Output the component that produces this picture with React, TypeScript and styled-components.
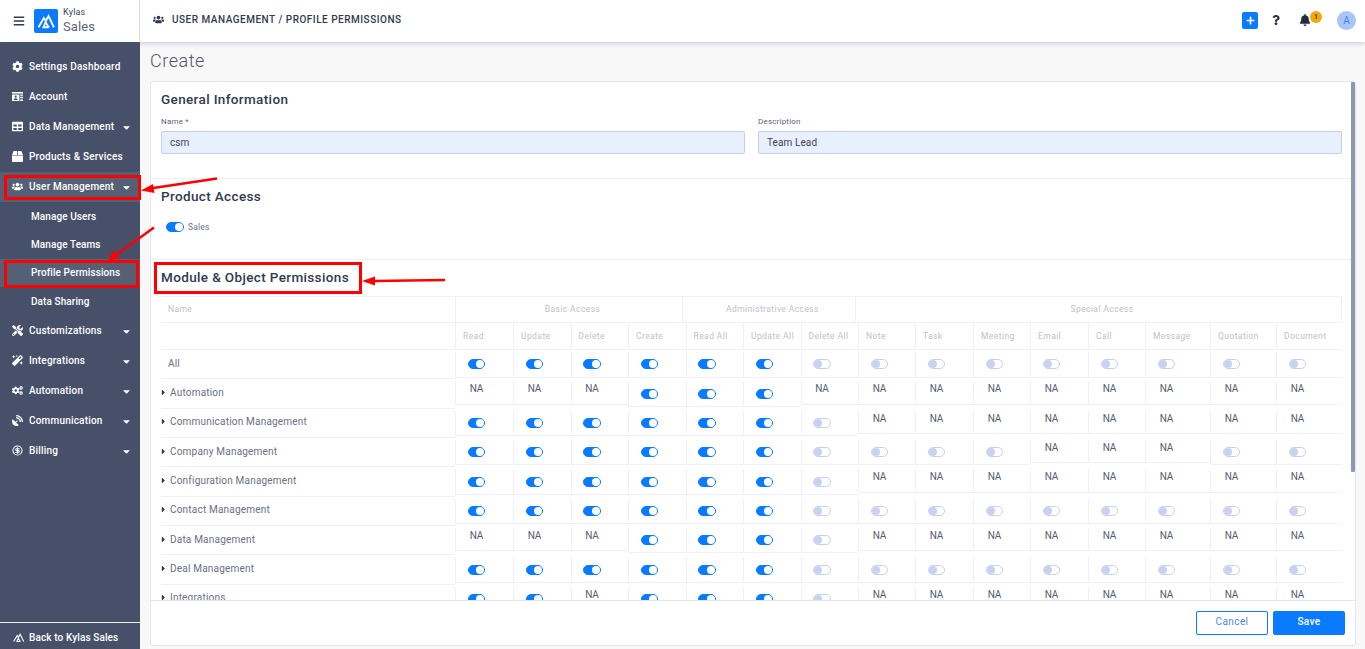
import React from "react";
import styled, { createGlobalStyle } from "styled-components";
import {
  FaBars, FaBell, FaBox, FaCaretDown, FaCaretRight, FaCog, FaCogs, FaMagic, FaPlus,
  FaQuestion, FaSatelliteDish, FaTable, FaTools, FaUsers,
} from "react-icons/fa";
import { CircleDollarSign } from "lucide-react";

const FONT = `Roboto, "Liberation Sans", sans-serif`;
const LINE = "#edf0fc";

const Global = createGlobalStyle`
  html, body { margin: 0; padding: 0; height: 100%; overflow: hidden; }
  body { font-family: ${FONT}; background: #f8f8f9; }
  * { box-sizing: border-box; }
`;

const Page = styled.div`
  position: relative;
  width: 1365px;
  height: 649px;
  display: grid;
  grid-template-rows: 42px 1fr;
  overflow: hidden;
`;

/* ---------- top bar ---------- */
const TopBar = styled.header`
  display: flex;
  align-items: stretch;
  background: #fff;
  box-shadow: 0 1px 5px rgba(90, 95, 130, 0.35);
  position: relative;
  z-index: 2;
`;
const Brand = styled.div`
  width: 140px;
  height: 41px;
  display: flex;
  align-items: center;
  padding-left: 12.5px;
  border-right: 1px solid #d5d8e0;
  color: #2f3a4f;
`;
const LogoBox = styled.div`
  width: 24px;
  height: 24px;
  margin-left: 9.5px;
  border-radius: 2px;
  background: #0a7bff;
  display: flex;
  align-items: center;
  justify-content: center;
`;
const BrandText = styled.div`
  margin-left: 5px;
  display: flex;
  flex-direction: column;
  color: #5b6579;
`;
const BrandTop = styled.span`
  font-size: 9px;
  line-height: 11px;
  letter-spacing: 0.2px;
  color: #3b4558;
`;
const BrandName = styled.span`
  font-size: 13px;
  line-height: 15px;
  letter-spacing: 0.1px;
  margin-top: 1px;
`;
const Crumb = styled.div`
  display: flex;
  align-items: center;
  gap: 8px;
  padding-left: 13px;
  flex: 1;
  height: 38px;
  color: #2f3a4f;
  font-size: 10px;
  font-weight: 500;
  letter-spacing: 0.5px;
  text-transform: uppercase;
`;
const Tools = styled.div`
  display: flex;
  align-items: center;
  height: 40px;
  padding-right: 9px;
`;
const PlusButton = styled.span`
  width: 16px;
  height: 17px;
  border-radius: 2px;
  background: #0a7bff;
  color: #fff;
  display: flex;
  align-items: center;
  justify-content: center;
`;
const HelpIcon = styled.span`
  display: flex;
  margin-left: 13px;
  color: #2a3347;
`;
const BellWrap = styled.span`
  position: relative;
  display: flex;
  margin-left: 18px;
  margin-right: 26px;
  color: #232b3e;
`;
const BellBadge = styled.span`
  position: absolute;
  top: -3px;
  left: 11px;
  width: 12px;
  height: 12px;
  border-radius: 50%;
  background: #eeaa10;
  color: #5a4a10;
  font-size: 7.5px;
  font-weight: 700;
  line-height: 12px;
  text-align: center;
`;
const Avatar = styled.span`
  width: 19px;
  height: 19px;
  border-radius: 50%;
  background: #a9c5f8;
  color: #3e82f2;
  font-size: 10px;
  line-height: 19px;
  text-align: center;
`;

/* ---------- body ---------- */
const Body = styled.div`
  display: grid;
  grid-template-columns: 140px 1fr;
  min-height: 0;
`;
const Sidebar = styled.nav`
  background: #465068;
  color: #fff;
  display: flex;
  flex-direction: column;
  padding-top: 10px;
  min-height: 0;
`;
const NavItem = styled.div<{ $active?: boolean }>`
  height: 30px;
  display: flex;
  align-items: center;
  padding-left: 12px;
  padding-right: 8px;
  padding-bottom: 1px;
  font-size: 10px;
  font-weight: 500;
  letter-spacing: 0.2px;
  background: ${(p) => (p.$active ? "#566074" : "transparent")};
`;
const NavIcon = styled.span`
  width: 17px;
  flex: none;
  display: flex;
  align-items: center;
`;
const NavLabel = styled.span`
  flex: 1;
  white-space: nowrap;
`;
const Caret = styled.span`
  display: flex;
  width: 11px;
  margin-top: 2px;
`;
const SubItem = styled.div<{ $active?: boolean }>`
  height: 28.4px;
  display: flex;
  align-items: center;
  padding-left: 31px;
  font-size: 10px;
  font-weight: 500;
  letter-spacing: 0.08px;
  background: ${(p) => (p.$active ? "#566074" : "transparent")};
`;
const SideFoot = styled.div`
  margin-top: auto;
  height: 27px;
  border-top: 1px solid #f1f2f6;
  display: flex;
  align-items: center;
  padding-left: 12px;
  padding-top: 3px;
  font-size: 10px;
  font-weight: 500;
  letter-spacing: 0.12px;
`;

const Main = styled.main`
  padding: 0 9px 3px 10px;
  display: flex;
  flex-direction: column;
  min-height: 0;
`;
const Title = styled.h1`
  margin: 0;
  height: 39px;
  padding-top: 8px;
  font-size: 18px;
  line-height: 22px;
  font-weight: 300;
  letter-spacing: 0.55px;
  color: #4e586c;
`;
const Card = styled.section`
  position: relative;
  flex: 1;
  min-height: 0;
  display: flex;
  flex-direction: column;
  background: #fff;
  border: 1px solid #e1e5f4;
  border-radius: 3px;
`;
const ScrollBody = styled.div`
  height: 518px;
  overflow: hidden;
  flex: none;
`;
const ScrollThumb = styled.div`
  position: absolute;
  top: 0;
  right: 0;
  width: 4px;
  height: 390px;
  background: #8f97b5;
  border-radius: 1px;
`;
const Section = styled.div`
  border-bottom: 1px solid ${LINE};
  padding: 0 10px;
`;
const H2 = styled.h2`
  margin: 0;
  font-size: 13.5px;
  line-height: 18px;
  font-weight: 500;
  letter-spacing: 0.36px;
  color: #2f3a4f;
`;
const GeneralSection = styled(Section)`
  height: 97px;
  padding-top: 8px;
`;
const FieldRow = styled.div`
  display: grid;
  grid-template-columns: 584px 584px;
  column-gap: 13px;
  margin-top: 9px;
`;
const Field = styled.div`
  display: flex;
  flex-direction: column;
`;
const FieldLabel = styled.label`
  font-size: 8px;
  line-height: 10px;
  height: 14px;
  letter-spacing: 0.2px;
  color: #5b6579;
  em {
    color: #e03a3a;
    font-style: normal;
  }
`;
const FieldValue = styled.div`
  height: 23px;
  background: #e8f0fe;
  border: 1px solid #c3cfe6;
  border-radius: 2px;
  padding-left: 8px;
  font-size: 10px;
  line-height: 21px;
  letter-spacing: 0.1px;
  color: #3a4356;
`;
const AccessSection = styled(Section)`
  height: 81px;
  padding-top: 8px;
`;
const AccessRow = styled.div`
  display: flex;
  align-items: center;
  gap: 4.5px;
  margin-top: 17px;
  padding-left: 5px;
  font-size: 8.5px;
  letter-spacing: 0.2px;
  color: #6b7385;
`;
const ModuleHead = styled.div`
  height: 36px;
  padding: 8px 10px 0;
`;
const TableWrap = styled.div`
  margin-left: 10px;
  width: 1181px;
`;
const GroupRow = styled.div`
  display: grid;
  grid-template-columns: 294px 227px 173px 487px;
  height: 27px;
  border-top: 1px solid ${LINE};
`;
const GroupCell = styled.div<{ $first?: boolean; $last?: boolean }>`
  display: flex;
  align-items: center;
  justify-content: ${(p) => (p.$first ? "flex-start" : "center")};
  padding-left: 7px;
  padding-bottom: 1px;
  border-left: ${(p) => (p.$first ? "0" : `1px solid ${LINE}`)};
  border-right: ${(p) => (p.$last ? `1px solid ${LINE}` : "0")};
  border-bottom: 1px solid ${LINE};
  font-size: 8.5px;
  letter-spacing: 0.4px;
  color: #bcc1cf;
`;
const COLS = "294px 58px 57.5px 57.5px 57.5px 57.5px 57.5px 57.5px 57px 58px 57px 58px 57px 65px 66px 65.5px";
const SubRow = styled.div`
  display: grid;
  grid-template-columns: ${COLS};
  height: 27px;
`;
const SubCell = styled.div<{ $blank?: boolean }>`
  display: flex;
  align-items: center;
  padding-left: 7px;
  padding-bottom: 1px;
  border-left: ${(p) => (p.$blank ? "0" : `1px solid ${LINE}`)};
  border-bottom: 1px solid ${LINE};
  font-size: 8.5px;
  letter-spacing: 0.42px;
  color: #bcc1cf;
  white-space: nowrap;
`;
const DataRow = styled.div`
  display: grid;
  grid-template-columns: ${COLS};
  height: 29.33px;
  align-items: start;
`;
const NameCell = styled.div<{ $plain?: boolean }>`
  height: 100%;
  display: flex;
  align-items: center;
  padding-left: ${(p) => (p.$plain ? "7px" : "0")};
  padding-bottom: 2px;
  border-bottom: 1px solid ${LINE};
  font-size: 10px;
  letter-spacing: 0.2px;
  color: #687082;
  white-space: nowrap;
`;
const RowCaret = styled.span`
  display: flex;
  width: 9px;
  margin-left: -2.5px;
  margin-right: 2.5px;
  color: #2f3a4f;
`;
const Cell = styled.div<{ $na?: boolean }>`
  margin-top: 2px;
  height: ${(p) => (p.$na ? "23.5px" : "25.5px")};
  padding-top: ${(p) => (p.$na ? "2px" : "0")};
  display: flex;
  align-items: ${(p) => (p.$na ? "flex-start" : "center")};
  border-left: 1px solid ${LINE};
  border-bottom: 1px solid ${LINE};
`;
const CellInner = styled.div`
  width: 41px;
  display: flex;
  justify-content: center;
  font-size: 10px;
  line-height: 12px;
  color: #545d70;
`;
const Toggle = styled.span<{ $on: boolean }>`
  position: relative;
  display: block;
  width: 17.5px;
  height: 10px;
  border-radius: 5px;
  background: ${(p) => (p.$on ? "#0a7bff" : "#fff")};
  border: 1px solid ${(p) => (p.$on ? "#0a7bff" : "#c6d0ef")};
  &::after {
    content: "";
    position: absolute;
    top: 0;
    ${(p) => (p.$on ? "right: 0;" : "left: 0;")}
    width: 8px;
    height: 8px;
    border-radius: 50%;
    background: ${(p) => (p.$on ? "#fff" : "#c8d2f0")};
  }
`;
const Footer = styled.footer`
  flex: 1;
  display: flex;
  justify-content: flex-end;
  align-items: flex-start;
  gap: 5px;
  padding: 10px 10px 0 0;
  border-top: 1px solid #e1e5f4;
`;
const Button = styled.button<{ $primary?: boolean }>`
  width: 72px;
  height: 24px;
  border-radius: 2px;
  font-family: ${FONT};
  font-size: 10px;
  font-weight: ${(p) => (p.$primary ? 500 : 400)};
  letter-spacing: 0.4px;
  padding: 0 0 3px;
  background: ${(p) => (p.$primary ? "#0a7bff" : "#fff")};
  color: ${(p) => (p.$primary ? "#fff" : "#4d86ee")};
  border: 1px solid #0a7bff;
`;
const Annotations = styled.svg`
  position: absolute;
  left: 0;
  top: 0;
  z-index: 5;
  pointer-events: none;
`;

const Mountain = ({ size, color, stroke = 2.2 }: { size: number; color: string; stroke?: number }) => (
  <svg width={size} height={size} viewBox="0 0 24 24" fill="none" stroke={color} strokeWidth={stroke} strokeLinejoin="miter">
    <path d="M3 19.5 9.5 8.5l3 4.5" />
    <path d="M9 19.5h5.5L15 19 11.5 13.5Z" />
    <path d="M12 11.5 15 6l6.5 13.5" />
  </svg>
);

const AccountIcon = () => (
  <svg width="11" height="11" viewBox="0 0 11 11" fill="#fff">
    <path d="M0 1h11v1.6H0z" />
    <path d="M0 3.4h7.4V10H0zM8.2 3.4H11v1.4H8.2zM8.2 5.8H11v1.4H8.2zM8.2 8.4H11V10H8.2z" />
    <circle cx="3.7" cy="5.6" r="1.1" fill="#465068" />
    <path d="M1.7 9c0-1.2 1-1.8 2-1.8s2 .6 2 1.8z" fill="#465068" />
  </svg>
);

const groups = ["Basic Access", "Administrative Access", "Special Access"];
const subs = ["Read", "Update", "Delete", "Create", "Read All", "Update All", "Delete All", "Note", "Task", "Meeting", "Email", "Call", "Message", "Quotation", "Document"];

/* 1 on, 0 off, n = NA */
const rows: { name: string; plain?: boolean; cells: string }[] = [
  { name: "All", plain: true, cells: "111111000000000" },
  { name: "Automation", cells: "nnn111nnnnnnnnn" },
  { name: "Communication Management", cells: "1111110nnnnnnnn" },
  { name: "Company Management", cells: "1111110000nnn00" },
  { name: "Configuration Management", cells: "1111110nnnnnnnn" },
  { name: "Contact Management", cells: "111111000000000" },
  { name: "Data Management", cells: "nnn1110nnnnnnnn" },
  { name: "Deal Management", cells: "111111000000000" },
  { name: "Integrations", cells: "11n1110nnnnnnnn" },
];

type Nav = { icon: React.ReactNode; label: string; caret?: boolean; active?: boolean; sub?: { label: string; active?: boolean }[] };
const nav: Nav[] = [
  { icon: <FaCog size={11} />, label: "Settings Dashboard" },
  { icon: <AccountIcon />, label: "Account" },
  { icon: <FaTable size={11} />, label: "Data Management", caret: true },
  { icon: <FaBox size={11} />, label: "Products & Services" },
  {
    icon: <FaUsers size={11} />, label: "User Management", caret: true, active: true,
    sub: [{ label: "Manage Users" }, { label: "Manage Teams" }, { label: "Profile Permissions", active: true }, { label: "Data Sharing" }],
  },
  { icon: <FaTools size={11} />, label: "Customizations", caret: true },
  { icon: <FaMagic size={11} />, label: "Integrations", caret: true },
  { icon: <FaCogs size={11} />, label: "Automation", caret: true },
  { icon: <FaSatelliteDish size={11} />, label: "Communication", caret: true },
  { icon: <CircleDollarSign size={11} strokeWidth={2.2} />, label: "Billing", caret: true },
];

export default function App() {
  return (
    <Page>
      <Global />
      <TopBar>
        <Brand>
          <FaBars size={12} />
          <LogoBox><Mountain size={20} color="#fff" /></LogoBox>
          <BrandText>
            <BrandTop>Kylas</BrandTop>
            <BrandName>Sales</BrandName>
          </BrandText>
        </Brand>
        <Crumb>
          <FaUsers size={11} />
          <span>User Management / Profile Permissions</span>
        </Crumb>
        <Tools>
          <PlusButton><FaPlus size={9} /></PlusButton>
          <HelpIcon><FaQuestion size={10} /></HelpIcon>
          <BellWrap>
            <FaBell size={12} />
            <BellBadge>1</BellBadge>
          </BellWrap>
          <Avatar>A</Avatar>
        </Tools>
      </TopBar>
      <Body>
        <Sidebar>
          {nav.map((item) => (
            <React.Fragment key={item.label}>
              <NavItem $active={item.active}>
                <NavIcon>{item.icon}</NavIcon>
                <NavLabel>{item.label}</NavLabel>
                {item.caret && <Caret><FaCaretDown size={11} /></Caret>}
              </NavItem>
              {item.sub?.map((s) => (
                <SubItem key={s.label} $active={s.active}>{s.label}</SubItem>
              ))}
            </React.Fragment>
          ))}
          <SideFoot>
            <NavIcon><Mountain size={13} color="#fff" stroke={2} /></NavIcon>
            <NavLabel>Back to Kylas Sales</NavLabel>
          </SideFoot>
        </Sidebar>
        <Main>
          <Title>Create</Title>
          <Card>
            <ScrollBody>
              <GeneralSection>
                <H2>General Information</H2>
                <FieldRow>
                  <Field>
                    <FieldLabel>Name <em>*</em></FieldLabel>
                    <FieldValue>csm</FieldValue>
                  </Field>
                  <Field>
                    <FieldLabel>Description</FieldLabel>
                    <FieldValue>Team Lead</FieldValue>
                  </Field>
                </FieldRow>
              </GeneralSection>
              <AccessSection>
                <H2>Product Access</H2>
                <AccessRow>
                  <Toggle $on />
                  <span>Sales</span>
                </AccessRow>
              </AccessSection>
              <ModuleHead><H2>Module &amp; Object Permissions</H2></ModuleHead>
              <TableWrap>
                <GroupRow>
                  <GroupCell $first>Name</GroupCell>
                  {groups.map((g, i) => (
                    <GroupCell key={g} $last={i === 2}>{g}</GroupCell>
                  ))}
                </GroupRow>
                <SubRow>
                  <SubCell $blank />
                  {subs.map((s) => <SubCell key={s}>{s}</SubCell>)}
                </SubRow>
                {rows.map((r) => (
                  <DataRow key={r.name}>
                    <NameCell $plain={r.plain}>
                      {!r.plain && <RowCaret><FaCaretRight size={9} /></RowCaret>}
                      {r.name}
                    </NameCell>
                    {r.cells.split("").map((c, i) => (
                      <Cell key={i} $na={c === "n"}>
                        <CellInner>{c === "n" ? "NA" : <Toggle $on={c === "1"} />}</CellInner>
                      </Cell>
                    ))}
                  </DataRow>
                ))}
              </TableWrap>
            </ScrollBody>
            <ScrollThumb />
            <Footer>
              <Button>Cancel</Button>
              <Button $primary>Save</Button>
            </Footer>
          </Card>
        </Main>
      </Body>
      <Annotations width="1365" height="649" viewBox="0 0 1365 649" fill="none">
        <rect x="5.5" y="176.5" width="134" height="22" stroke="#f00" strokeWidth="3" />
        <rect x="5.5" y="261.5" width="132" height="25" stroke="#f00" strokeWidth="3" />
        <rect x="155.5" y="263.5" width="205" height="29" stroke="#f00" strokeWidth="3" />
        <path d="M217 178.5 150 188.5" stroke="#f00" strokeWidth="2.5" />
        <path d="M141 190.5 153 184 154.5 193Z" fill="#f00" />
        <path d="M154 227.5 116 255" stroke="#f00" strokeWidth="2.5" />
        <path d="M108 261 113 250 120 258Z" fill="#f00" />
        <path d="M445 280 374 281" stroke="#f00" strokeWidth="2.5" />
        <path d="M362 281 375 276.5V285.5Z" fill="#f00" />
      </Annotations>
    </Page>
  );
}
